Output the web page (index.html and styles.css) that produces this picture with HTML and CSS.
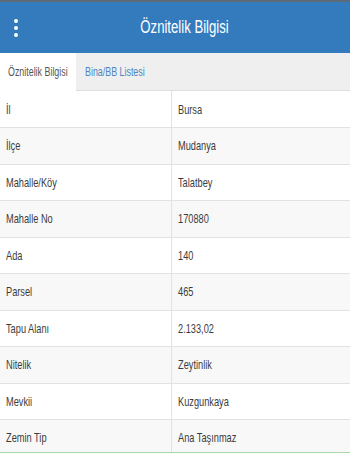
FILE: index.html
```html
<!DOCTYPE html>
<html lang="tr">
<head>
  <meta charset="UTF-8">
  <meta name="viewport" content="width=device-width, initial-scale=1.0">
  <title>Öznitelik Bilgisi</title>
  <link rel="stylesheet" href="styles.css">
</head>
<body>
  <div class="page">
    <div class="app-header">
      <div class="menu-btn">
        <span class="dot"></span>
        <span class="dot"></span>
        <span class="dot"></span>
      </div>
      <h1 class="app-title"><span class="narrow">Öznitelik Bilgisi</span></h1>
    </div>

    <div class="tabs">
      <div class="tab active"><span class="narrow">Öznitelik Bilgisi</span></div>
      <div class="tab"><span class="narrow">Bina/BB Listesi</span></div>
    </div>

    <div class="table-wrap">
      <table class="info-table">
        <tr><td><span class="narrow">İl</span></td><td><span class="narrow">Bursa</span></td></tr>
        <tr><td><span class="narrow">İlçe</span></td><td><span class="narrow">Mudanya</span></td></tr>
        <tr><td><span class="narrow">Mahalle/Köy</span></td><td><span class="narrow">Talatbey</span></td></tr>
        <tr><td><span class="narrow">Mahalle No</span></td><td><span class="narrow">170880</span></td></tr>
        <tr><td><span class="narrow">Ada</span></td><td><span class="narrow">140</span></td></tr>
        <tr><td><span class="narrow">Parsel</span></td><td><span class="narrow">465</span></td></tr>
        <tr><td><span class="narrow">Tapu Alanı</span></td><td><span class="narrow">2.133,02</span></td></tr>
        <tr><td><span class="narrow">Nitelik</span></td><td><span class="narrow">Zeytinlik</span></td></tr>
        <tr><td><span class="narrow">Mevkii</span></td><td><span class="narrow">Kuzgunkaya</span></td></tr>
        <tr><td><span class="narrow">Zemin Tip</span></td><td><span class="narrow">Ana Taşınmaz</span></td></tr>
      </table>
    </div>

    <div class="footer-line"></div>
  </div>
</body>
</html>
```

FILE: styles.css
```css
* {
  margin: 0;
  padding: 0;
  box-sizing: border-box;
}
body {
  font-family: 'Liberation Sans', Arial, sans-serif;
  background: #fff;
  color: #3c3c3c;
}
.page {
  height: 455px;
  display: flex;
  flex-direction: column;
  overflow: hidden;
}
/* the app renders a condensed face, squeeze the glyphs horizontally */
.narrow {
  display: inline-block;
  white-space: nowrap;
  transform: scaleX(0.71);
  transform-origin: left center;
}

/* header */
.app-header {
  height: 53px;
  flex-shrink: 0;
  background: #347bbd;
  border-top: 2px solid #5d6b79;
  display: flex;
  align-items: center;
}
.menu-btn {
  width: 32px;
  display: flex;
  flex-direction: column;
  align-items: center;
  gap: 3px;
  padding-top: 1px;
}
.dot {
  width: 4px;
  height: 4px;
  border-radius: 50%;
  background: #fff;
}
.app-title {
  flex: 1;
  padding-right: 12px;
  text-align: center;
  color: #fff;
  font-size: 18px;
  font-weight: normal;
}
.app-title .narrow {
  transform: scaleX(0.73);
  transform-origin: center center;
}

/* tabs */
.tabs {
  height: 38px;
  flex-shrink: 0;
  background: #efefef;
  border-bottom: 1px solid #ddd;
  display: flex;
}
.tab {
  width: 84px;
  padding: 0 9px;
  font-size: 12.5px;
  line-height: 38px;
  color: #4a86c5;
  overflow: hidden;
}
.tab.active {
  width: 76px;
  padding-left: 8px;
  background: #fff;
  color: #555;
  margin-bottom: -1px;
  line-height: 38px;
}

/* table */
.table-wrap {
  flex: 1;
  overflow: hidden;
}
.info-table {
  width: 100%;
  border-collapse: collapse;
  font-size: 13px;
}
.info-table td {
  height: 36.5px;
  padding: 0 6px;
  border-bottom: 1px solid #e2e2e2;
  vertical-align: middle;
}
.info-table td:first-child {
  width: 171px;
  border-right: 1px solid #e2e2e2;
}
.info-table tr:nth-child(even) td {
  background: #f8f8f8;
}

.footer-line {
  height: 3px;
  flex-shrink: 0;
  border-top: 1px solid #a8d8a8;
  background: #fff;
}
```
